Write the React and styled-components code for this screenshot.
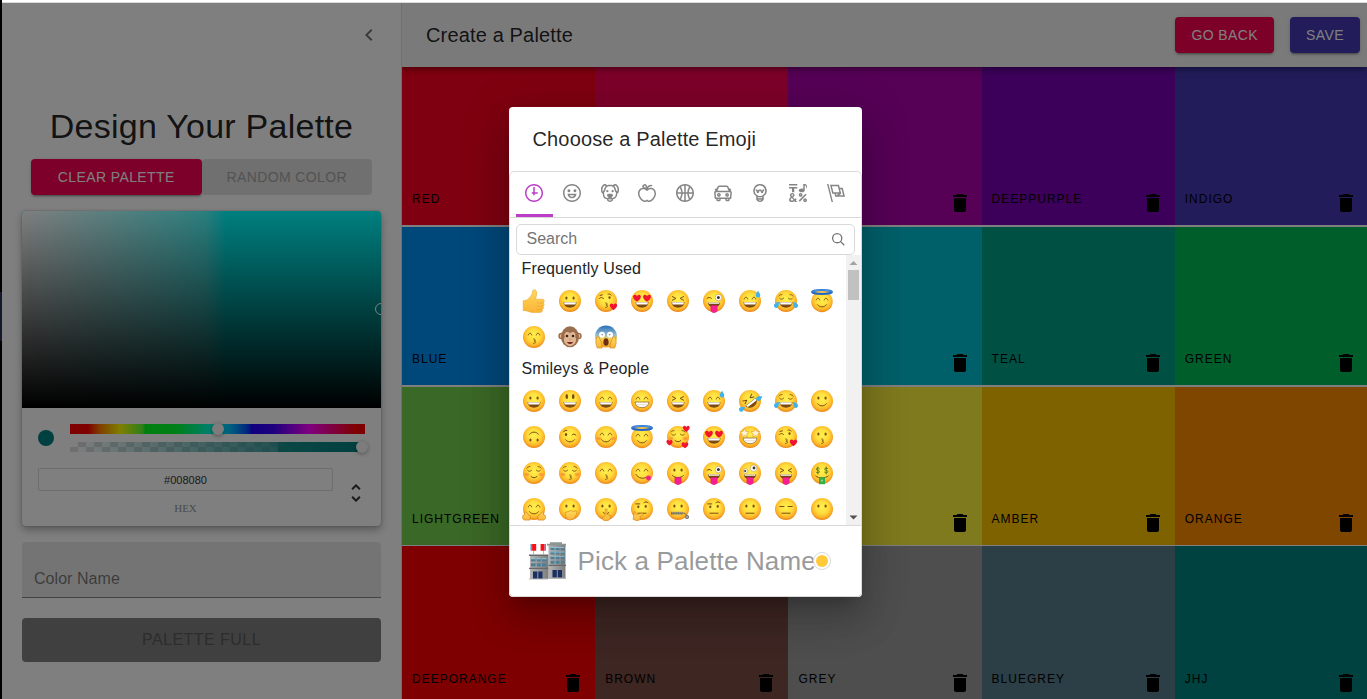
import React from "react";
import styled, { createGlobalStyle } from "styled-components";

const GlobalStyle = createGlobalStyle`
  *, *::before, *::after { box-sizing: border-box; }
  html, body { margin: 0; height: 100%; overflow: hidden; }
  body { font-family: "Liberation Sans", Arial, sans-serif; color: rgba(0, 0, 0, 0.87); }
  #root { height: 100%; }
  h1, h2, h3, p { margin: 0; font-weight: 400; }
  button { font-family: inherit; border: 0; margin: 0; padding: 0; background: none; }
  svg { display: block; flex: none; }
`;

/* ---------- frame ---------- */

const Frame = styled.div`
  display: flex;
  height: 699px;
  width: 1367px;
  overflow: hidden;
`;

const LeftEdge = styled.div`
  width: 2px;
  flex: none;
  background: linear-gradient(#000 292px, #151a2a 292px, #151a2a 341px, #000 341px);
`;

const Window = styled.div`
  flex: 1;
  min-width: 0;
  display: flex;
  flex-direction: column;
`;

const TopEdge = styled.div`
  height: 3px;
  flex: none;
  background: #fff;
  border-bottom: 1px solid #dadada;
`;

const Workspace = styled.div`
  position: relative;
  flex: 1;
  min-height: 0;
  display: flex;
  overflow: hidden;
`;

/* ---------- shared ---------- */

const raised =
  "0 3px 1px -2px rgba(0,0,0,.2), 0 2px 2px 0 rgba(0,0,0,.14), 0 1px 5px 0 rgba(0,0,0,.12)";

const Button = styled.button`
  height: ${(p) => (p.$large ? 44 : 36)}px;
  padding: 0 16px;
  flex: ${(p) => (p.$fill ? "1 1 0" : "none")};
  width: ${(p) => (p.$large ? "100%" : "auto")};
  border-radius: 4px;
  font-size: ${(p) => (p.$large ? 16 : 14)}px;
  letter-spacing: 0.02857em;
  text-transform: uppercase;
  white-space: nowrap;
  color: ${(p) => p.$color || "#fff"};
  background: ${(p) => p.$bg};
  box-shadow: ${(p) => (p.$flat ? "none" : raised)};
`;

/* ---------- drawer ---------- */

const Drawer = styled.aside`
  width: 400px;
  flex: none;
  background: #fff;
  border-right: 1px solid rgba(0, 0, 0, 0.12);
  display: flex;
  flex-direction: column;
`;

const DrawerTop = styled.div`
  height: 64px;
  display: flex;
  align-items: center;
  justify-content: flex-end;
  padding-right: 20px;
  color: rgba(0, 0, 0, 0.54);
`;

const DrawerBody = styled.div`
  padding: 38px 20px 0;
  display: flex;
  flex-direction: column;
`;

const Heading = styled.h2`
  font-size: 34px;
  line-height: 42px;
  letter-spacing: 0.00735em;
  text-align: center;
  white-space: nowrap;
  margin-bottom: 12px;
`;

const ButtonPair = styled.div`
  display: flex;
  width: 341px;
  margin: 0 auto 16px 9px;
`;

const Picker = styled.div`
  height: 315px;
  border-radius: 4px;
  background: #fff;
  overflow: hidden;
  box-shadow: 0 0 2px rgba(0, 0, 0, 0.3), 0 4px 8px rgba(0, 0, 0, 0.3);
`;

const Saturation = styled.div`
  position: relative;
  height: 197px;
  overflow: hidden;
  background:
    linear-gradient(to top, #000, rgba(0, 0, 0, 0)),
    linear-gradient(to right, #fff 0%, rgba(255, 255, 255, 0.48) 42%, rgba(255, 255, 255, 0.34) 51%, rgba(255, 255, 255, 0) 57%),
    #00ffff;
`;

const SaturationRing = styled.div`
  position: absolute;
  left: 353px;
  top: 92px;
  width: 12px;
  height: 12px;
  border: 1px solid #fff;
  border-radius: 50%;
`;

const PickerSliders = styled.div`
  display: flex;
  align-items: center;
  padding: 16px 16px 0;
`;

const Swatch = styled.div`
  width: 16px;
  height: 16px;
  border-radius: 50%;
  background: #008080;
  margin-right: 16px;
`;

const Sliders = styled.div`
  flex: 1;
  display: flex;
  flex-direction: column;
  gap: 8px;
`;

const Track = styled.div`
  position: relative;
  height: 10px;
  background: ${(p) => p.$bg};
`;

const Knob = styled.div`
  position: absolute;
  left: ${(p) => p.$x}px;
  top: -1px;
  width: 12px;
  height: 12px;
  border-radius: 50%;
  background: #f8f8f8;
  box-shadow: 0 1px 4px 0 rgba(0, 0, 0, 0.37);
`;

const HexRow = styled.div`
  display: flex;
  padding: 16px 13px 0 16px;
`;

const HexField = styled.div`
  width: 295px;
  display: flex;
  flex-direction: column;
  align-items: center;
`;

const HexValue = styled.div`
  width: 100%;
  height: 23px;
  line-height: 24px;
  border-radius: 2px;
  box-shadow: inset 0 0 0 1px #dadada;
  font-size: 11px;
  text-align: center;
  color: #333;
`;

const HexLabel = styled.div`
  margin-top: 12px;
  font-family: "Liberation Serif", serif;
  font-size: 11px;
  line-height: 11px;
  color: #969696;
`;

const Toggle = styled.div`
  display: flex;
  flex: 1;
  justify-content: flex-end;
  padding-top: 13px;
  color: #333;
`;

const NameField = styled.div`
  height: 56px;
  margin-top: 16px;
  padding: 17px 12px 0;
  border-radius: 4px 4px 0 0;
  background: rgba(0, 0, 0, 0.09);
  border-bottom: 1px solid rgba(0, 0, 0, 0.42);
  font-size: 16px;
  line-height: 39px;
  letter-spacing: 0.05px;
  color: rgba(0, 0, 0, 0.5);
`;

const Submit = styled.div`
  margin-top: 20px;
`;

/* ---------- main ---------- */

const Main = styled.main`
  flex: 1;
  min-width: 0;
  display: flex;
  flex-direction: column;
`;

const AppBar = styled.header`
  position: relative;
  z-index: 1;
  height: 64px;
  flex: none;
  display: flex;
  align-items: center;
  gap: 16px;
  padding: 0 7px 0 24px;
  background: #f5f5f5;
  box-shadow: 0 2px 4px -1px rgba(0, 0, 0, 0.2), 0 4px 5px 0 rgba(0, 0, 0, 0.14),
    0 1px 10px 0 rgba(0, 0, 0, 0.12);
  clip-path: inset(0 0 -12px 0);
`;

const BarTitle = styled.h1`
  flex: 1;
  font-size: 20px;
  line-height: 32px;
  letter-spacing: 0.0075em;
`;

const Board = styled.div`
  flex: 1;
  overflow: hidden;
  background: #fff;
`;

const BoardRow = styled.div`
  display: grid;
  grid-template-columns: repeat(5, 193.2px);
  height: ${(p) => (p.$last ? 159 : 158)}px;
  margin-bottom: ${(p) => p.$gap}px;
`;

const Tile = styled.div`
  background: ${(p) => p.$bg};
  display: flex;
  align-items: flex-end;
  padding: 0 10px 10px;
  color: #000;
`;

const TileFoot = styled.div`
  flex: 1;
  display: flex;
  justify-content: space-between;
  align-items: flex-start;
`;

const TileName = styled.span`
  font-size: 12px;
  line-height: 17px;
  letter-spacing: 1px;
  text-transform: uppercase;
`;

/* ---------- dialog ---------- */

const Backdrop = styled.div`
  position: absolute;
  inset: 0;
  z-index: 2;
  display: flex;
  align-items: center;
  justify-content: center;
  padding: 2px 0 0 2px;
  background: rgba(0, 0, 0, 0.5);
`;

const Dialog = styled.section`
  width: 353px;
  height: 490px;
  border-radius: 4px;
  background: #fff;
  box-shadow: 0 11px 15px -7px rgba(0, 0, 0, 0.2), 0 24px 38px 3px rgba(0, 0, 0, 0.14),
    0 9px 46px 8px rgba(0, 0, 0, 0.12);
`;

const DialogTitle = styled.h2`
  height: 64px;
  padding: 16px 23.5px;
  font-size: 20px;
  line-height: 32px;
  letter-spacing: 0.0075em;
`;

const EmojiPanel = styled.div`
  height: 426px;
  border: 1px solid #d9d9d9;
  border-radius: 5px;
  display: flex;
  flex-direction: column;
  font-size: 16px;
  letter-spacing: 0.15px;
  color: #222427;
`;

const Categories = styled.nav`
  height: 46px;
  flex: none;
  display: flex;
  padding: 0 6.5px 0 5.5px;
  border-bottom: 1px solid #d9d9d9;
`;

const Category = styled.button`
  flex: 1 1 0;
  display: flex;
  justify-content: center;
  padding-top: 12px;
  color: ${(p) => (p.$active ? "#bb3dc8" : "#858585")};
  border-bottom: 3px solid ${(p) => (p.$active ? "#bb3dc8" : "transparent")};
`;

const SearchBox = styled.div`
  height: 31px;
  flex: none;
  margin: 6px 6px 0;
  padding: 0 9px 0 9.5px;
  display: flex;
  align-items: center;
  justify-content: space-between;
  border: 1px solid #d9d9d9;
  border-radius: 5px;
  letter-spacing: 0;
  color: #757575;
`;

const SearchHint = styled.span`
  line-height: 27px;
  padding-bottom: 2px;
`;

const ScrollArea = styled.div`
  height: 270px;
  flex: none;
  display: flex;
`;

const EmojiList = styled.div`
  flex: 1;
  overflow: hidden;
  padding: 0 6px;
`;

const GroupTitle = styled.h3`
  height: 28px;
  padding: 0 5.5px;
  font-size: 16px;
  line-height: 28px;
`;

const EmojiGrid = styled.div`
  display: grid;
  grid-template-columns: repeat(9, 36px);
  grid-auto-rows: 36px;
  place-items: center;
`;

const Scrollbar = styled.div`
  width: 15px;
  background: #f1f1f1;
  display: flex;
  flex-direction: column;
  align-items: center;
`;

const Thumb = styled.div`
  width: 11px;
  height: 30px;
  margin-bottom: auto;
  background: #c1c1c1;
`;

const Preview = styled.footer`
  flex: 1;
  display: flex;
  align-items: center;
  padding-left: 19px;
  border-top: 1px solid #d9d9d9;
`;

const PreviewText = styled.span`
  margin-left: 10.5px;
  font-size: 26px;
  line-height: 30px;
  white-space: nowrap;
  color: #999a9c;
`;

const SkinTone = styled.div`
  width: 18px;
  height: 18px;
  flex: none;
  margin-left: -3px;
  z-index: 1;
  border: 1px solid #d9d9d9;
  border-radius: 50%;
  display: flex;
  align-items: center;
  justify-content: center;
  background: #fff;
  &::after {
    content: "";
    width: 12px;
    height: 12px;
    border-radius: 50%;
    background: #ffc93a;
  }
`;

/* ---------- icons ---------- */

const Icon = ({ d, size = 24, box = 24 }) => (
  <svg width={size} height={size} viewBox={`0 0 ${box} ${box}`} fill="currentColor">
    {[].concat(d).map((path, i) => (
      <path key={i} d={path} />
    ))}
  </svg>
);

const CHEVRON = "M15.41 7.41L14 6l-6 6 6 6 1.41-1.41L10.83 12z";
const TRASH =
  "M6 19c0 1.1.9 2 2 2h8c1.1 0 2-.9 2-2V7H6v12zM19 4h-3.5l-1-1h-5l-1 1H5v2h14V4z";
const SEARCH =
  "M12.9 14.32a8 8 0 1 1 1.41-1.41l5.35 5.33-1.42 1.42-5.33-5.34zM8 14A6 6 0 1 0 8 2a6 6 0 0 0 0 12z";
const UNFOLD =
  "M12,18.17L8.83,15L7.42,16.41L12,21L16.59,16.41L15.17,15M12,5.83L15.17,9L16.58,7.59L12,3L7.41,7.59L8.83,9L12,5.83Z";

const RING =
  "M12 0C5.373 0 0 5.373 0 12s5.373 12 12 12 12-5.373 12-12S18.627 0 12 0m0 22C6.486 22 2 17.514 2 12S6.486 2 12 2s10 4.486 10 10-4.486 10-10 10";

const CATEGORY_ICONS = [
  ["M13 4h-2l-.001 7H9v2h2v2h2v-2h4v-2h-4z", RING],
  [
    RING,
    "M8 7a2 2 0 1 0-.001 3.999A2 2 0 0 0 8 7M16 7a2 2 0 1 0-.001 3.999A2 2 0 0 0 16 7M15.232 15c-.693 1.195-1.87 2-3.349 2-1.477 0-2.655-.805-3.347-2H15m3-2H6a6 6 0 1 0 12 0",
  ],
  [
    "M15.5 8a1.5 1.5 0 1 0 .001 3.001A1.5 1.5 0 0 0 15.5 8M8.5 8a1.5 1.5 0 1 0 .001 3.001A1.5 1.5 0 0 0 8.5 8",
    "M18.933 0h-.027c-.97 0-2.138.787-3.018 1.497-1.274-.374-2.612-.51-3.887-.51-1.285 0-2.616.133-3.874.517C7.245.79 6.069 0 5.093 0h-.027C3.352 0 .07 2.67.002 7.026c-.039 2.479.276 4.238 1.04 5.013.254.258.882.677 1.295.882.191 3.177.922 5.238 2.536 6.38.897.637 2.187.949 3.2 1.102C8.04 20.6 8 20.795 8 21c0 1.773 2.35 3 4 3 1.648 0 4-1.227 4-3 0-.201-.038-.393-.072-.586 2.573-.385 5.435-1.877 5.925-7.587.396-.22.887-.568 1.104-.788.763-.774 1.079-2.534 1.04-5.013C23.929 2.67 20.646 0 18.933 0M3.223 9.135c-.237.281-.837 1.155-.884 1.238-.15-.41-.368-1.349-.337-3.291.051-3.281 2.478-4.972 3.091-5.031.256.015.731.27 1.265.646-1.11 1.171-2.275 2.915-2.352 5.125-.133.546-.398.858-.783 1.313M12 22c-.901 0-1.954-.693-2-1 0-.654.475-1.236 1-1.602V20a1 1 0 1 0 2 0v-.602c.524.365 1 .947 1 1.602-.046.307-1.099 1-2 1m3-3.48v.02a4.752 4.752 0 0 0-1.262-1.02c1.092-.516 2.239-1.334 2.239-2.217 0-1.842-1.781-2.195-3.977-2.195-2.196 0-3.978.354-3.978 2.195 0 .883 1.148 1.701 2.238 2.217A4.8 4.8 0 0 0 9 18.539v-.025c-1-.076-2.182-.281-2.973-.842-1.301-.92-1.838-3.045-1.853-6.478l.023-.041c.496-.826 1.49-1.45 1.804-3.102 0-2.047 1.357-3.631 2.362-4.522C9.37 3.178 10.555 3 11.948 3c1.447 0 2.685.192 3.733.57 1 .9 2.316 2.465 2.316 4.48.313 1.651 1.307 2.275 1.803 3.102.035.058.068.117.102.178-.059 5.967-1.949 7.01-4.902 7.19m6.628-8.202c-.037-.065-.074-.13-.113-.195a7.587 7.587 0 0 0-.739-.987c-.385-.455-.648-.768-.782-1.313-.076-2.209-1.241-3.954-2.353-5.124.531-.376 1.004-.63 1.261-.647.636.071 3.044 1.764 3.096 5.031.027 1.81-.347 3.218-.37 3.235",
  ],
  "M17 4.978c-1.838 0-2.876.396-3.68.934.513-1.172 1.768-2.934 4.68-2.934a1 1 0 0 0 0-2c-2.921 0-4.629 1.365-5.547 2.512-.064.078-.119.162-.18.244C11.73 1.838 10.798.023 9.207.023 8.579.022 7.85.306 7 .978 5.027 2.54 5.329 3.902 6.492 4.999 3.609 5.222 0 7.352 0 12.969c0 4.582 4.961 11.009 9 11.009 1.975 0 2.371-.486 3-1 .629.514 1.025 1 3 1 4.039 0 9-6.418 9-11 0-5.953-4.055-8-7-8M8.242 2.546c.641-.508.943-.523.965-.523.426.169.975 1.405 1.357 3.055-1.527-.629-2.741-1.352-2.98-1.846.059-.112.241-.356.658-.686M15 21.978c-1.08 0-1.21-.109-1.559-.402l-.176-.146c-.367-.302-.816-.452-1.266-.452s-.898.15-1.266.452l-.176.146c-.347.292-.477.402-1.557.402-2.813 0-7-5.389-7-9.009 0-5.823 4.488-5.991 5-5.991 1.939 0 2.484.471 3.387 1.251l.323.276a1.995 1.995 0 0 0 2.58 0l.323-.276c.902-.78 1.447-1.251 3.387-1.251.512 0 5 .168 5 6 0 3.617-4.187 9-7 9",
  "M12 0C5.373 0 0 5.372 0 12c0 6.627 5.373 12 12 12 6.628 0 12-5.373 12-12 0-6.628-5.372-12-12-12m9.949 11H17.05c.224-2.527 1.232-4.773 1.968-6.113A9.966 9.966 0 0 1 21.949 11M13 11V2.051a9.945 9.945 0 0 1 4.432 1.564c-.858 1.491-2.156 4.22-2.392 7.385H13zm-2 0H8.961c-.238-3.165-1.536-5.894-2.393-7.385A9.95 9.95 0 0 1 11 2.051V11zm0 2v8.949a9.937 9.937 0 0 1-4.432-1.564c.857-1.492 2.155-4.221 2.393-7.385H11zm4.04 0c.236 3.164 1.534 5.893 2.392 7.385A9.92 9.92 0 0 1 13 21.949V13h2.04zM4.982 4.887C5.718 6.227 6.726 8.473 6.951 11h-4.9a9.977 9.977 0 0 1 2.931-6.113M2.051 13h4.9c-.226 2.527-1.233 4.771-1.969 6.113A9.972 9.972 0 0 1 2.051 13m16.967 6.113c-.735-1.342-1.744-3.586-1.968-6.113h4.899a9.961 9.961 0 0 1-2.931 6.113",
  [
    "M6.5 12C5.122 12 4 13.121 4 14.5S5.122 17 6.5 17 9 15.879 9 14.5 7.878 12 6.5 12m0 3c-.275 0-.5-.225-.5-.5s.225-.5.5-.5.5.225.5.5-.225.5-.5.5M17.5 12c-1.378 0-2.5 1.121-2.5 2.5s1.122 2.5 2.5 2.5 2.5-1.121 2.5-2.5-1.122-2.5-2.5-2.5m0 3c-.275 0-.5-.225-.5-.5s.225-.5.5-.5.5.225.5.5-.225.5-.5.5",
    "M22.482 9.494l-1.039-.346L21.4 9h.6c.552 0 1-.439 1-.992 0-.006-.003-.008-.003-.008H23c0-1-.889-2-1.984-2h-.642l-.731-1.717C19.262 3.012 18.091 2 16.764 2H7.236C5.909 2 4.738 3.012 4.357 4.283L3.626 6h-.642C1.889 6 1 7 1 8h.003S1 8.002 1 8.008C1 8.561 1.448 9 2 9h.6l-.043.148-1.039.346a2.001 2.001 0 0 0-1.359 2.097l.751 7.508a1 1 0 0 0 .994.901H3v1c0 1.103.896 2 2 2h2c1.104 0 2-.897 2-2v-1h6v1c0 1.103.896 2 2 2h2c1.104 0 2-.897 2-2v-1h1.096a.999.999 0 0 0 .994-.901l.751-7.508a2.001 2.001 0 0 0-1.359-2.097M6.273 4.857C6.402 4.43 6.788 4 7.236 4h9.527c.448 0 .834.43.963.857L19.313 9H4.688l1.585-4.143zM7 21H5v-1h2v1zm12 0h-2v-1h2v1zm2.189-3H2.811l-.662-6.607L3 11h18l.852.393L21.189 18z",
  ],
  [
    "M12 0a9 9 0 0 0-5 16.482V21s2.035 3 5 3 5-3 5-3v-4.518A9 9 0 0 0 12 0zm0 2c3.86 0 7 3.141 7 7s-3.14 7-7 7-7-3.141-7-7 3.14-7 7-7zM9 17.477c.94.332 1.946.523 3 .523s2.06-.19 3-.523v.834c-.91.436-1.925.689-3 .689a6.924 6.924 0 0 1-3-.69v-.833zm.236 3.07A8.854 8.854 0 0 0 12 21c.965 0 1.888-.167 2.758-.451C14.155 21.173 13.153 22 12 22c-1.102 0-2.117-.789-2.764-1.453z",
    "M14.745 12.449h-.004c-.852-.024-1.188-.858-1.577-1.824-.421-1.061-.703-1.561-1.182-1.566h-.009c-.481 0-.783.497-1.235 1.537-.436.982-.801 1.811-1.636 1.791l-.276-.043c-.565-.171-.853-.691-1.284-1.794-.125-.313-.202-.632-.27-.913-.051-.213-.127-.53-.195-.634C7.067 9.004 7.039 9 6.99 9A1 1 0 0 1 7 7h.01c1.662.017 2.015 1.373 2.198 2.134.486-.981 1.304-2.058 2.797-2.075 1.531.018 2.28 1.153 2.731 2.141l.002-.008C14.944 8.424 15.327 7 16.979 7h.032A1 1 0 1 1 17 9h-.011c-.149.076-.256.474-.319.709a6.484 6.484 0 0 1-.311.951c-.429.973-.79 1.789-1.614 1.789",
  ],
  "M0 0h11v2H0zM4 11h3V6h4V4H0v2h4zM15.5 17c1.381 0 2.5-1.116 2.5-2.493s-1.119-2.493-2.5-2.493S13 13.13 13 14.507 14.119 17 15.5 17m0-2.986c.276 0 .5.222.5.493 0 .272-.224.493-.5.493s-.5-.221-.5-.493.224-.493.5-.493M21.5 19.014c-1.381 0-2.5 1.116-2.5 2.493S20.119 24 21.5 24s2.5-1.116 2.5-2.493-1.119-2.493-2.5-2.493m0 2.986a.497.497 0 0 1-.5-.493c0-.271.224-.493.5-.493s.5.222.5.493a.497.497 0 0 1-.5.493M22 13l-9 9 1.513 1.5 8.99-9.009zM17 11c2.209 0 4-1.119 4-2.5V2s.985-.161 1.498.949C23.01 4.055 23 6 23 6s1-1.119 1-3.135C24-.02 21 0 21 0h-2v6.347A5.853 5.853 0 0 0 17 6c-2.209 0-4 1.119-4 2.5s1.791 2.5 4 2.5M10.297 20.482l-1.475-1.585a47.54 47.54 0 0 1-1.442 1.129c-.307-.288-.989-1.016-2.045-2.183.902-.836 1.479-1.466 1.729-1.892s.376-.871.376-1.336c0-.592-.273-1.178-.818-1.759-.546-.581-1.329-.871-2.349-.871-1.008 0-1.79.293-2.344.879-.556.587-.832 1.181-.832 1.784 0 .813.419 1.748 1.256 2.805-.847.614-1.444 1.208-1.794 1.784a3.465 3.465 0 0 0-.523 1.833c0 .857.308 1.56.924 2.107.616.549 1.423.823 2.42.823 1.173 0 2.444-.379 3.813-1.137L8.235 24h2.819l-2.09-2.383 1.333-1.135zm-6.736-6.389a1.02 1.02 0 0 1 .73-.286c.31 0 .559.085.747.254a.849.849 0 0 1 .283.659c0 .518-.419 1.112-1.257 1.784-.536-.651-.805-1.231-.805-1.742a.901.901 0 0 1 .302-.669M3.74 22c-.427 0-.778-.116-1.057-.349-.279-.232-.418-.487-.418-.766 0-.594.509-1.288 1.527-2.083.968 1.134 1.717 1.946 2.248 2.438-.921.507-1.686.76-2.3.76",
  "M0 0l6.084 24H8L1.916 0zM21 5h-4l-1-4H4l3 12h3l1 4h13L21 5zM6.563 3h7.875l2 8H8.563l-2-8zm8.832 10l-2.856 1.904L12.063 13h3.332zM19 13l-1.5-6h1.938l2 8H16l3-2z",
];

/* ---------- emoji drawings ---------- */

const INK = "#7a4d12";
const line = {
  fill: "none",
  stroke: INK,
  strokeWidth: 1,
  strokeLinecap: "round",
  strokeLinejoin: "round",
};

const EmojiPaints = () => (
  <svg width="0" height="0" style={{ position: "absolute" }}>
    <defs>
      <radialGradient id="face" cx="50%" cy="42%" r="58%">
        <stop offset="0" stopColor="#fff04e" />
        <stop offset="0.5" stopColor="#ffdc3c" />
        <stop offset="0.8" stopColor="#fcb328" />
        <stop offset="1" stopColor="#e98318" />
      </radialGradient>
      <linearGradient id="hand" x1="0" y1="0" x2="0" y2="1">
        <stop offset="0" stopColor="#ffd95a" />
        <stop offset="1" stopColor="#fab437" />
      </linearGradient>
      <linearGradient id="fear" x1="0" y1="0" x2="0" y2="1">
        <stop offset="0" stopColor="#2a6fb8" />
        <stop offset="0.42" stopColor="#8fb9cf" />
        <stop offset="0.6" stopColor="#f8cf4c" />
        <stop offset="1" stopColor="#f3a025" />
      </linearGradient>
      <linearGradient id="wall" x1="0" y1="0" x2="1" y2="0">
        <stop offset="0" stopColor="#b4b4b4" />
        <stop offset="1" stopColor="#7c7c7c" />
      </linearGradient>
    </defs>
  </svg>
);

const Heart = ({ x, y, s = 1 }) => (
  <path
    transform={`translate(${x} ${y}) scale(${s})`}
    fill="#f0142f"
    d="M0 3.2C-4.4.4-3.6-2.7-1.7-2.7-.8-2.7-.2-2 0-1.3.2-2 .8-2.7 1.7-2.7 3.6-2.7 4.4.4 0 3.2z"
  />
);

const Drop = ({ x, y, r = 0 }) => (
  <path
    transform={`translate(${x} ${y}) rotate(${r})`}
    fill="#3fb4ec"
    d="M0-3.6C1.2-1.8 2.3-.4 2.3.9A2.3 2.3 0 0 1-2.3.9C-2.3-.4-1.2-1.8 0-3.6z"
  />
);

const Disc = () => <circle cx="12" cy="12" r="11" fill="url(#face)" />;

const EYES = {
  dots: (
    <g fill={INK}>
      <ellipse cx="8.4" cy="9" rx="1.1" ry="1.5" />
      <ellipse cx="15.6" cy="9" rx="1.1" ry="1.5" />
    </g>
  ),
  tall: (
    <g fill={INK}>
      <ellipse cx="8.8" cy="7.6" rx="1.3" ry="2.5" />
      <ellipse cx="15.2" cy="7.6" rx="1.3" ry="2.5" />
    </g>
  ),
  arcs: <path {...line} d="M6.2 10c.5-2.4 3.1-2.4 3.6 0M14.2 10c.5-2.4 3.1-2.4 3.6 0" />,
  closed: (
    <path
      {...line}
      strokeWidth=".9"
      d="M5.6 9.3c1 1.3 2.8 1.3 4 0M14.4 9.3c1.2 1.3 3 1.3 4 0M5 7c.7-1 1.8-1.5 3-1.4M16 5.6c1.2-.1 2.3.4 3 1.4"
    />
  ),
  squint: <path {...line} d="M6.4 7.6l3.5 1.8-3.5 1.8M17.6 7.6l-3.5 1.8 3.5 1.8" />,
  wink: (
    <g>
      <ellipse cx="8" cy="9.6" rx="1.2" ry="1.5" fill={INK} />
      <path {...line} d="M14 10c1-1.3 2.8-1.3 4 .2M5.5 6.800c.8-1.2 2-1.7 3.300-1.5" />
    </g>
  ),
  winkLeft: (
    <g>
      <ellipse cx="15.500" cy="8.600" rx="1.100" ry="1.400" fill={INK} />
      <path {...line} d="M5.500 9.400c1.200-1.300 3-1.300 4 .2M14 5.100c1.300-.4 2.600.1 3.200 1M6 6.500l2.400-.7" />
    </g>
  ),
  hearts: (
    <g>
      <Heart x={7} y={9} s={1.2} />
      <Heart x={17} y={9} s={1.2} />
    </g>
  ),
  stars: (
    <path
      fill="#fff3cf"
      stroke="#dd9a36"
      strokeWidth=".6"
      d="M6.500 3.500l1.300 2.800 3.200.4-2.300 2.200.6 3.100-2.800-1.500-2.700 1.500.5-3.100L2 6.700l3.200-.4zM17.500 3.500l1.300 2.800 3.200.4-2.300 2.200.6 3.100-2.800-1.500-2.700 1.500.5-3.100L13 6.700l3.200-.4z"
    />
  ),
  flat: <path {...line} d="M5.800 9.500h4.200M14 9.500h4.200" />,
  wide: (
    <g>
      <path {...line} d="M5 9.400c1.200-1.300 3-1.300 4.400 0" />
      <circle cx="16.400" cy="8.600" r="3.200" fill="#fff" stroke="#a5875a" strokeWidth=".5" />
      <circle cx="16.400" cy="8.600" r="1.500" fill="#3b3330" />
    </g>
  ),
  crazy: (
    <g>
      <circle cx="7.600" cy="10" r="2.300" fill="#fff" stroke="#a5875a" strokeWidth=".5" />
      <circle cx="7.200" cy="10" r="1.100" fill="#3b3330" />
      <circle cx="15.600" cy="7.200" r="3.300" fill="#fff" stroke="#a5875a" strokeWidth=".5" />
      <circle cx="16" cy="7" r="1.400" fill="#3b3330" />
    </g>
  ),
  raised: (
    <g>
      <ellipse cx="8.300" cy="9.800" rx="1.100" ry="1.400" fill={INK} />
      <ellipse cx="15.700" cy="9.400" rx="1.100" ry="1.400" fill={INK} />
      <path {...line} d="M5.800 6.900h4M14 5.600c1.200-1.100 3-1 4 .2" />
    </g>
  ),
  money: (
    <path
      {...line}
      stroke="#53761c"
      strokeWidth=".9"
      d="M9.300 7.500c-.8-.9-3-.7-3 .7 0 1.500 3.200.9 3.200 2.500 0 1.500-2.600 1.500-3.400.5M7.800 6v7M17.700 7.500c-.8-.9-3-.7-3 .7 0 1.500 3.200.9 3.200 2.500 0 1.500-2.600 1.500-3.400.5M16.200 6v7"
    />
  ),
};

const Tongue = () => (
  <path
    d="M8.800 16.500h6.400v4.500c0 3.500-6.400 3.500-6.400 0z"
    fill="#f71f92"
    stroke="#d4106f"
    strokeWidth=".4"
  />
);

const MOUTHS = {
  open: (
    <g>
      <path d="M5.500 13h13c-.2 7.600-12.800 7.600-13 0z" fill="#7d4a12" />
      <path d="M6 13.300h12l-.6 2.200H6.600z" fill="#fff" />
    </g>
  ),
  teeth: (
    <g>
      <path d="M5 13h14c-.2 7.600-13.800 7.600-14 0z" fill="#fff" stroke="#9b6b2c" strokeWidth=".8" />
      <path d="M5.800 15.800h12.400" stroke="#c5b79c" strokeWidth=".5" />
    </g>
  ),
  smile: <path {...line} d="M7.500 14.700c2.400 3 6.600 3 9 0" />,
  small: <path {...line} d="M9 15.500c1.700 1.700 4.300 1.700 6 0" />,
  kiss: (
    <path
      {...line}
      strokeWidth=".85"
      d="M11.600 14c2.600 0 2.200 2 .3 2.100 2.500 0 2.400 2.400-.3 2.300"
    />
  ),
  flat: <path {...line} d="M8 16.200h8" />,
  tongue: (
    <g>
      <path {...line} d="M6.500 14.500c2.600 2.800 8.400 2.800 11 0" />
      <Tongue />
    </g>
  ),
  openTongue: (
    <g>
      <path d="M5.800 13.400h12.400c-.4 6.400-12 6.400-12.400 0z" fill="#754512" />
      <path d="M6.300 13.500h11.400l-.5 1.300H6.800z" fill="#fff" />
      <Tongue />
    </g>
  ),
  yum: (
    <g>
      <path {...line} d="M6 13.500c2.300 4.200 8.500 5 11.500 2" />
      <circle cx="18.500" cy="17" r="2.400" fill="#f71f92" />
    </g>
  ),
  cash: (
    <g>
      <path {...line} d="M5.800 15c2.500 2.500 9.900 2.500 12.400 0" />
      <path d="M9 16.300h6v6.900H9z" fill="#35ad48" />
      <circle cx="12" cy="19.700" r="1.100" fill="#8bdc8c" />
    </g>
  ),
  zip: (
    <g>
      <path d="M5 16.200h12" stroke="#88867f" strokeWidth="3" strokeDasharray="1.200 .5" />
      <path d="M5 16.200h14l3 4" stroke="#6f6e6a" strokeWidth="1" fill="none" />
      <circle cx="21" cy="20" r="1.700" fill="#a0a0a0" stroke="#6d6d6d" strokeWidth=".8" />
    </g>
  ),
  none: null,
};

const Palm = ({ d }) => <path d={d} fill="url(#hand)" stroke="#d07f16" strokeWidth=".6" />;

const Blush = () => (
  <g fill="#f4613a" opacity=".4">
    <ellipse cx="5" cy="13.500" rx="2.500" ry="1.700" />
    <ellipse cx="19" cy="13.500" rx="2.500" ry="1.700" />
  </g>
);

const face = (eyes, mouth, extra = null, turn = 0) => (
  <>
    <Disc />
    <g transform={`rotate(${turn} 12 12)`}>
      {EYES[eyes]}
      {MOUTHS[mouth]}
    </g>
    {extra}
  </>
);

const GLYPHS = {
  thumb: (
    <g fill="url(#hand)" stroke="#e39a26" strokeWidth=".5">
      <path d="M1.200 11.800c2.400-.6 4.200-.8 5.600-2.400 2-2.300 3.600-4 3.800-7.200.2-2 3.300-2.300 3.900.6.500 2.300-.3 5-1 7.400h6.700c2.500 0 2.600 3.100.8 3.600 1.600.6 1.500 2.900-.1 3.400 1.100.8.800 2.700-.7 3.100.800 1.400-.1 3.100-2 3.100h-7.200c-3.500 0-5-1.800-9.800-2z" />
      <path d="M15 13.800h5.800M15 17.200h5.600M14.700 20.300h5" fill="none" />
    </g>
  ),
  grinning: face("dots", "open"),
  smiley: face("tall", "open"),
  smile: face("arcs", "open"),
  grin: face("arcs", "teeth"),
  laughing: face("squint", "open"),
  sweat: face("arcs", "open", <Drop x={20} y={5.3} />),
  rofl: (
    <g>
      {face("squint", "open", null, -38)}
      <Drop x={4} y={20} r={60} />
      <Drop x={21.3} y={9.2} r={60} />
    </g>
  ),
  joy: face(
    "closed",
    "open",
    <>
      <Drop x={2.8} y={15.8} r={35} />
      <Drop x={21.2} y={15.8} r={-35} />
    </>
  ),
  slight: face("dots", "smile"),
  upside: face("dots", "smile", null, 180),
  wink: face("wink", "smile"),
  blush: face("arcs", "smile", <Blush />),
  angel: (
    <g>
      <g transform="translate(0 1)">
        <circle cx="12" cy="11.500" r="10.700" fill="url(#face)" />
        {EYES.arcs}
        {MOUTHS.smile}
      </g>
      <ellipse cx="12" cy="3" rx="10" ry="1.900" fill="#f6c04a" stroke="#1f66cc" strokeWidth="2" />
      <path d="M2.500 2.700c4-2.200 15-2.200 19 0" fill="none" stroke="#5fb0f5" strokeWidth=".8" />
    </g>
  ),
  adore: face(
    "closed",
    "small",
    <>
      <Blush />
      <Heart x={20.3} y={3.7} s={1.05} />
      <Heart x={3.5} y={17.5} s={0.95} />
      <Heart x={19} y={20} s={1.05} />
    </>
  ),
  heartEyes: face("hearts", "open"),
  star: face("stars", "teeth"),
  kissHeart: face("winkLeft", "kiss", <Heart x={19.5} y={17.500} s={1.150} />),
  kiss: face("dots", "kiss"),
  relaxed: face("closed", "small", <Blush />),
  kissClosed: face("closed", "kiss", <Blush />),
  kissSmile: face("arcs", "kiss"),
  yum: face("arcs", "yum"),
  tongue: face("dots", "tongue"),
  winkTongue: face("wide", "openTongue"),
  zany: face("crazy", "openTongue"),
  squintTongue: face("squint", "openTongue"),
  money: face("money", "cash"),
  hug: face(
    "arcs",
    "smile",
    <>
      <Palm d="M.8 18.300l2.200-.8-.8-2.300 2-.2 1.800 2.600 2.500 1.500-.6 4H2.200L.5 21.500z" />
      <Palm d="M23.200 18.300l-2.200-.8.8-2.300-2-.2-1.800 2.600-2.500 1.500.6 4h5.700l1.700-1.500z" />
    </>
  ),
  hush: face("dots", "none", <Palm d="M7 15.500l6.500-2 1.500 1 3-.8 1 2-2.500 5.800-4.800 1.700-3.600-2.500z" />),
  shush: face("dots", "small", <Palm d="M11.200 12h1.800v5.500l3.200.6.300 3.500-2.500 2.100h-4l-2-3.200 3.200-2z" />),
  think: face("raised", "flat", <Palm d="M4.500 14.500l2 3 6-1.300 1 1.500-3.500 1.800.5 3-3.500 1.400-4-1.700z" />),
  zip: face("dots", "zip"),
  raised: face("raised", "flat"),
  neutral: face("dots", "flat"),
  blank: face("flat", "flat"),
  mute: face("dots", "none"),
  monkey: (
    <g>
      <circle cx="3.600" cy="11" r="3.300" fill="#9c6d4a" />
      <circle cx="20.400" cy="11" r="3.300" fill="#9c6d4a" />
      <circle cx="3.600" cy="11" r="1.900" fill="#edb795" />
      <circle cx="20.400" cy="11" r="1.900" fill="#edb795" />
      <ellipse cx="12" cy="11.800" rx="9" ry="10.500" fill="#9a6d4c" />
      <path d="M12 8.500c2.600-3 6.600-.8 5.200 3.300 2.400 3.800-.5 9.200-5.200 9.200s-7.600-5.400-5.200-9.200C5.400 7.700 9.400 5.500 12 8.500z" fill="#e0b592" />
      <circle cx="9" cy="11" r="1.300" fill="#35241b" />
      <circle cx="15" cy="11" r="1.300" fill="#35241b" />
      <path d="M11 14.200h.3M12.800 14.200h.3" stroke="#5e3a28" strokeWidth="1" />
      <path d="M9 17h6c-.8 2.700-5.200 2.700-6 0z" fill="#7c2a23" />
    </g>
  ),
  scream: (
    <g>
      <circle cx="12" cy="11.500" r="11" fill="url(#fear)" />
      <circle cx="8" cy="9.700" r="3" fill="#fff" />
      <circle cx="16" cy="9.700" r="3" fill="#fff" />
      <circle cx="8.200" cy="9.700" r=".6" fill="#555" />
      <circle cx="15.800" cy="9.700" r=".6" fill="#555" />
      <ellipse cx="12" cy="17" rx="2.600" ry="3.800" fill="#6d2f12" />
      <Palm d="M2.300 12.500l2.500-.7 2.600 5.700.8 5.500H3.200l-1.400-5z" />
      <Palm d="M21.700 12.500l-2.500-.7-2.600 5.700-.8 5.500h5l1.400-5z" />
    </g>
  ),
};

const Emoji = ({ name }) => (
  <svg width="24" height="24" viewBox="0 0 24 24">
    {GLYPHS[name]}
  </svg>
);

const Store = () => (
  <svg width="38" height="38" viewBox="1 0 38 38">
    <path d="M20.500 2h17v34h-17z" fill="url(#wall)" />
    <path d="M19 1.800h19v1.800H19zM22 .3h12V2H22z" fill="#8c9694" />
    <path d="M2 14h18.500v23H2z" fill="url(#wall)" />
    <path d="M1 12.500h19.300v1.600H1zM1 25.800h19.300v1.200H1zM20.500 22.800H38V24H20.500z" fill="#686868" />
    <path
      d="M3 16h4.600v3.500H3zM8.800 16h4v3.500h-4zM14 16h4.600v3.500H14zM3 21.300h4.600v3.200H3zM8.800 21.300h4v3.200h-4zM14 21.300h4.600v3.200H14zM22.500 5h4v3h-4zM27.800 5h3.700v3h-3.700zM32.800 5h3.700v3h-3.700zM22.500 9.600h4v3h-4zM27.800 9.600h3.700v3h-3.700zM32.800 9.600h3.700v3h-3.700zM22.500 14.200h4v3h-4zM27.800 14.200h3.700v3h-3.700zM32.800 14.200h3.700v3h-3.700zM22.500 18.800h4v3h-4zM27.800 18.800h3.700v3h-3.700zM32.800 18.800h3.700v3h-3.700z"
      fill="#4f7f97"
    />
    <path
      d="M3 16h4.600v1.200H3zM8.800 16h4v1.200h-4zM14 16h4.600v1.200H14zM22.500 5h14v.9h-14zM22.500 9.600h14v.9h-14zM22.500 14.200h14v.9h-14z"
      fill="#8fc0cf"
    />
    <path d="M5 29.500h4.300V37H5zM10.300 29.500h4.200V37h-4.200zM24.500 28h4.300v7.500h-4.300zM29.800 28H34v7.500h-4.200z" fill="#1a2f62" />
    <path d="M5.500 9v4M15.500 9v4" stroke="#ef8c83" strokeWidth=".8" />
    <path d="M2.500 2h1.600v6.800H2.500zM16.500 2H18v6.800h-1.500z" fill="#3b9bea" />
    <path d="M4.100 2h4.100v6.800H4.100zM12.600 2h3.900v6.800h-3.900z" fill="#fb0f13" />
    <path d="M1 36.400h19v1H1zM20.500 35.700H38v1.200H20.500z" fill="#b5b5b5" />
  </svg>
);

/* ---------- data ---------- */

const ROWS = [
  [["Red", "#ff0020"], ["", "#fa0054"], ["", "#ac00ac"], ["DeepPurple", "#7800b4"], ["Indigo", "#4438b4"]],
  [["Blue", "#0090f4"], ["", "#00a0f0"], ["", "#00c0d4"], ["Teal", "#00a088"], ["Green", "#00bc54"]],
  [["LightGreen", "#74d04c"], ["", "#c8d83c"], ["", "#fff43c"], ["Amber", "#ffc400"], ["Orange", "#ff8c00"]],
  [["DeepOrange", "#ff0000"], ["Brown", "#7c4c46"], ["Grey", "#9c9c9c"], ["BlueGrey", "#587c8c"], ["jhj", "#008480"]],
];

const FREQUENT = [
  "thumb", "grinning", "kissHeart", "heartEyes", "laughing", "winkTongue", "sweat", "joy", "angel",
  "kissSmile", "monkey", "scream",
];

const PEOPLE = [
  "grinning", "smiley", "smile", "grin", "laughing", "sweat", "rofl", "joy", "slight",
  "upside", "wink", "blush", "angel", "adore", "heartEyes", "star", "kissHeart", "kiss",
  "relaxed", "kissClosed", "kissSmile", "yum", "tongue", "winkTongue", "zany", "squintTongue", "money",
  "hug", "hush", "shush", "think", "zip", "raised", "neutral", "blank", "mute",
];

const HUE =
  "linear-gradient(to right, #f00 6%, #ff7a00 10%, #ff0 17%, #5cff30 24.5%, #00ff20 25.5%, #00ff30 36%, #0ff 50%, #00a0ff 56%, #0040ff 60.5%, #2000ff 61.5%, #3c00ff 69%, #f0f 81%, #f00 97%)";
const ALPHA =
  "linear-gradient(to right, rgba(0,128,128,0), rgba(0,128,128,.72) 70%, rgba(0,132,128,.9) 71%, #008080), repeating-conic-gradient(#fff 0 25%, #e0e0e0 0 50%) -8px 0 / 16px 10px";

export default function App() {
  return (
    <Frame>
      <GlobalStyle />
      <EmojiPaints />
      <LeftEdge />
      <Window>
        <TopEdge />
        <Workspace>
          <Drawer>
            <DrawerTop>
              <Icon d={CHEVRON} />
            </DrawerTop>
            <DrawerBody>
              <Heading>Design Your Palette</Heading>
              <ButtonPair>
                <Button $fill $bg="#fa0054">Clear Palette</Button>
                <Button $fill $flat $bg="#e0e0e0" $color="#a6a6a6">Random Color</Button>
              </ButtonPair>
              <Picker>
                <Saturation>
                  <SaturationRing />
                </Saturation>
                <PickerSliders>
                  <Swatch />
                  <Sliders>
                    <Track $bg={HUE}><Knob $x={142} /></Track>
                    <Track $bg={ALPHA}><Knob $x={286} /></Track>
                  </Sliders>
                </PickerSliders>
                <HexRow>
                  <HexField>
                    <HexValue>#008080</HexValue>
                    <HexLabel>HEX</HexLabel>
                  </HexField>
                  <Toggle>
                    <Icon d={UNFOLD} />
                  </Toggle>
                </HexRow>
              </Picker>
              <NameField>Color Name</NameField>
              <Submit>
                <Button $large $flat $bg="#808080" $color="#5a5a5a">Palette Full</Button>
              </Submit>
            </DrawerBody>
          </Drawer>
          <Main>
            <AppBar>
              <BarTitle>Create a Palette</BarTitle>
              <Button $bg="#fa0050">Go Back</Button>
              <Button $bg="#4438b4">Save</Button>
            </AppBar>
            <Board>
              {ROWS.map((row, i) => (
                <BoardRow key={i} $last={i === 3} $gap={i < 2 ? 2 : 1}>
                  {row.map(([name, color]) => (
                    <Tile key={color} $bg={color}>
                      <TileFoot>
                        <TileName>{name}</TileName>
                        <Icon d={TRASH} />
                      </TileFoot>
                    </Tile>
                  ))}
                </BoardRow>
              ))}
            </Board>
          </Main>
          <Backdrop>
            <Dialog>
              <DialogTitle>Chooose a Palette Emoji</DialogTitle>
              <EmojiPanel>
                <Categories>
                  {CATEGORY_ICONS.map((d, i) => (
                    <Category key={i} $active={i === 0}>
                      <Icon d={d} size={18} />
                    </Category>
                  ))}
                </Categories>
                <SearchBox>
                  <SearchHint>Search</SearchHint>
                  <Icon d={SEARCH} size={13} box={20} />
                </SearchBox>
                <ScrollArea>
                  <EmojiList>
                    <GroupTitle>Frequently Used</GroupTitle>
                    <EmojiGrid>
                      {FREQUENT.map((name) => <Emoji key={name} name={name} />)}
                    </EmojiGrid>
                    <GroupTitle>Smileys &amp; People</GroupTitle>
                    <EmojiGrid>
                      {PEOPLE.map((name) => <Emoji key={name} name={name} />)}
                    </EmojiGrid>
                  </EmojiList>
                  <Scrollbar>
                    <svg width="15" height="15"><path d="M3.500 10l4-4 4 4z" fill="#a3a3a3" /></svg>
                    <Thumb />
                    <svg width="15" height="15"><path d="M3.500 5.500l4 4 4-4z" fill="#505050" /></svg>
                  </Scrollbar>
                </ScrollArea>
                <Preview>
                  <Store />
                  <PreviewText>Pick a Palette Name</PreviewText>
                  <SkinTone />
                </Preview>
              </EmojiPanel>
            </Dialog>
          </Backdrop>
        </Workspace>
      </Window>
    </Frame>
  );
}
